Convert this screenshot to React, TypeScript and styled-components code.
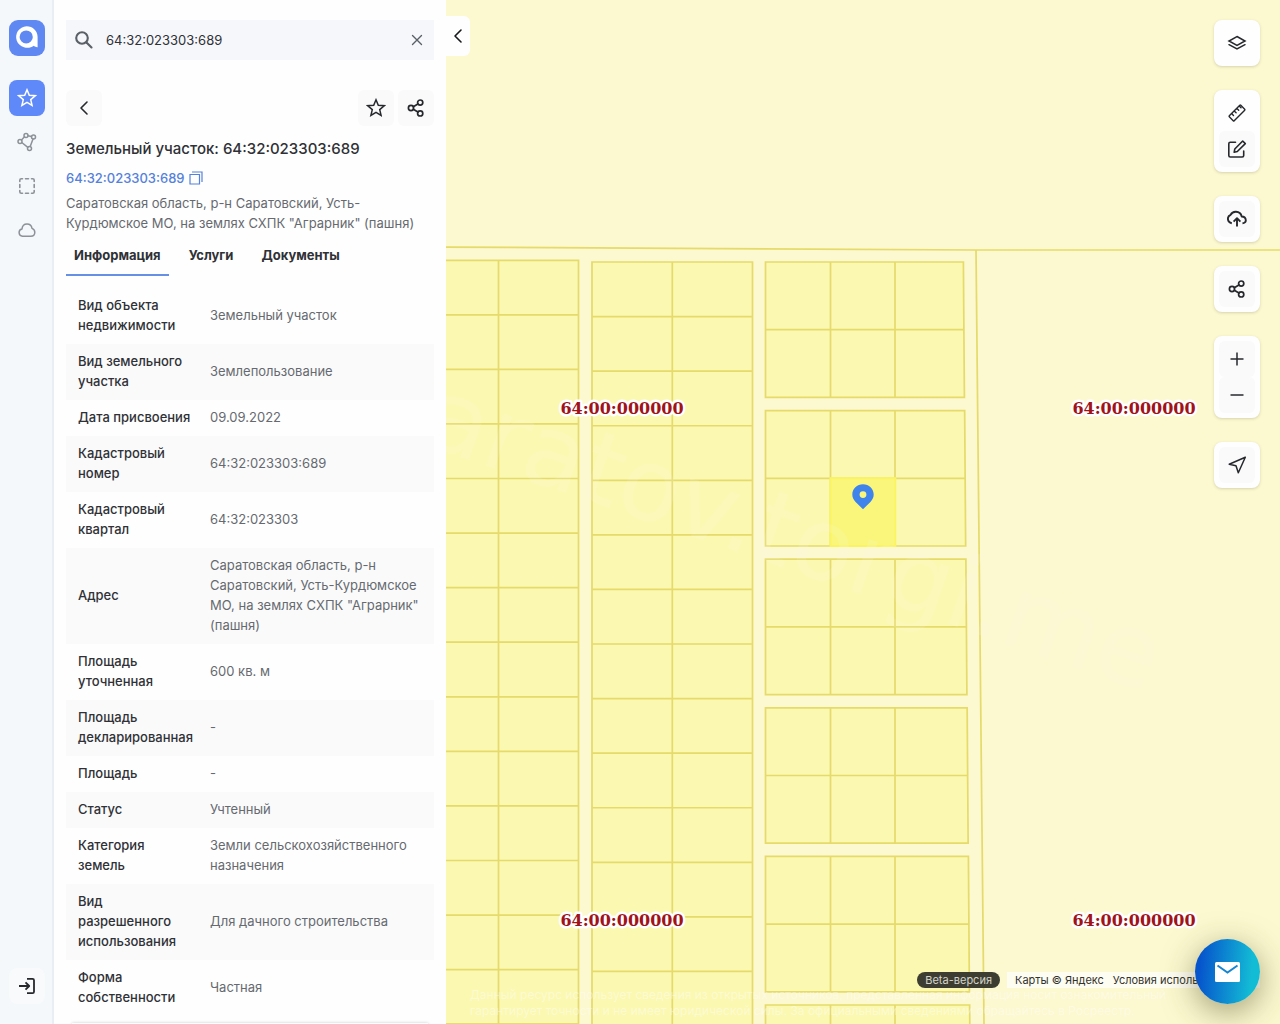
import React, { useState } from "react";
import styled, { createGlobalStyle, css } from "styled-components";

const GlobalStyle = createGlobalStyle`
  *, *::before, *::after { box-sizing: border-box; }
  body {
    margin: 0;
    font-family: Inter, "Liberation Sans", sans-serif;
    font-size: 13px;
    line-height: 20px;
    color: #2f3136;
    background: #fefefe;
  }
  button, input { font: inherit; color: inherit; }
`;

const Page = styled.div`
  display: flex;
  height: 100vh;
  overflow: hidden;
`;

const Rail = styled.nav`
  flex: none;
  display: flex;
  flex-direction: column;
  align-items: center;
  gap: 8px;
  width: 54px;
  padding: 20px 0;
  background: #f4f8fb;
  box-shadow: inset -2px 0 0 #e9eef4;
`;

const Logo = styled.a`
  display: block;
  width: 36px;
  height: 36px;
  margin-bottom: 16px;
  border-radius: 9px;
  background: #5f88f2;
`;

const plainButton = css`
  display: flex;
  align-items: center;
  justify-content: center;
  padding: 0;
  border: 0;
  background: transparent;
  cursor: pointer;
`;

const RailButton = styled.button<{ $active?: boolean }>`
  ${plainButton}
  width: 36px;
  height: 36px;
  border-radius: 8px;
  color: ${(p) => (p.$active ? "#ffffff" : "#8d9299")};
  background: ${(p) => (p.$active ? "#5f88f9" : "transparent")};
`;

const LoginButton = styled(RailButton)`
  margin-top: auto;
  color: #26282c;
  background: #f8fafb;
`;

const Panel = styled.aside`
  flex: none;
  width: 392px;
  padding: 20px 12px 0;
  overflow: hidden;
  background: #fefefe;
`;

const SearchBox = styled.form`
  display: flex;
  align-items: center;
  height: 40px;
  padding: 0 8px;
  background: #f5f7fb;
`;

const SearchInput = styled.input`
  flex: 1;
  min-width: 0;
  padding: 0 12px;
  border: 0;
  outline: 0;
  background: transparent;
`;

const ClearButton = styled.button`
  ${plainButton}
  width: 18px;
  height: 18px;
  color: #5b6067;
`;

const CardActions = styled.div`
  display: flex;
  gap: 4px;
  margin-top: 30px;
`;

const SquareButton = styled.button<{ $push?: boolean }>`
  ${plainButton}
  width: 36px;
  height: 36px;
  margin-right: ${(p) => (p.$push ? "auto" : "0")};
  border-radius: 6px;
  color: #26282c;
  background: #fafafb;
`;

const Title = styled.h1`
  margin: 11px 0 0;
  font-size: 15px;
  font-weight: 500;
  line-height: 24px;
`;

const NumberLine = styled.div`
  display: flex;
  align-items: center;
  gap: 2px;
  margin-top: 7px;
`;

const NumberLink = styled.a`
  color: #5581dc;
  font-weight: 500;
  text-decoration: none;
`;

const CopyButton = styled.button`
  ${plainButton}
  width: 18px;
  height: 20px;
  color: #5581dc;
`;

const Address = styled.p`
  margin: 5px 0 0;
  color: #666a70;
`;

const Tabs = styled.div`
  display: flex;
  gap: 12px;
  margin-top: 12px;
`;

const Tab = styled.button<{ $active: boolean }>`
  ${plainButton}
  align-items: flex-start;
  height: 31px;
  padding: 0 8px;
  font-weight: 700;
  border-bottom: 2px solid ${(p) => (p.$active ? "#6690e4" : "transparent")};
`;

const Details = styled.table`
  width: 100%;
  margin-top: 12px;
  border-collapse: collapse;
  table-layout: fixed;
`;

const DetailRow = styled.tr`
  &:nth-child(even) { background: #fafafb; }
`;

const DetailName = styled.th`
  width: 132px;
  padding: 7px 4px 9px 12px;
  font-weight: 500;
  text-align: left;
`;

const DetailValue = styled.td`
  padding: 7px 12px 9px;
  color: #666a70;
`;

const SectionCard = styled.section`
  height: 60px;
  margin: 7px 6px 0;
  box-shadow: 0 0 3px rgba(0, 0, 0, 0.2);
`;

const MapArea = styled.main`
  position: relative;
  flex: 1;
  min-width: 0;
  overflow: hidden;
  background: #fcf8cf;
`;

const MapCanvas = styled.svg`
  display: block;
  width: 100%;
  height: 100%;
`;

const CollapseButton = styled.button`
  ${plainButton}
  position: absolute;
  top: 16px;
  left: 0;
  width: 24px;
  height: 40px;
  border-radius: 0 6px 6px 0;
  color: #17181a;
  background: #fefefe;
`;

const Tools = styled.div`
  position: absolute;
  top: 20px;
  right: 20px;
  display: flex;
  flex-direction: column;
  gap: 24px;
`;

const ToolGroup = styled.div`
  padding: 5px;
  border-radius: 8px;
  background: #fefefe;
  box-shadow: 0 1px 3px rgba(80, 80, 60, 0.22);
`;

const ToolButton = styled.button<{ $tint?: boolean }>`
  ${plainButton}
  width: 36px;
  height: 36px;
  border-radius: 6px;
  color: #26282c;
  background: ${(p) => (p.$tint ? "#fafafb" : "transparent")};
`;

const MapFooter = styled.div`
  position: absolute;
  right: 20px;
  bottom: 36px;
  display: flex;
  gap: 7px;
  font-size: 11px;
  line-height: 16px;
`;

const Beta = styled.span`
  padding: 0 8px;
  border-radius: 8px;
  color: #d4d4cc;
  background: #3d3d31;
`;

const Copyright = styled.div`
  display: flex;
  gap: 9px;
  width: 253px;
  padding: 0 8px;
  white-space: nowrap;
  overflow: hidden;
  background: rgba(255, 255, 255, 0.72);
`;

const MapLink = styled.a`
  color: #33332e;
  text-decoration: none;
`;

const Disclaimer = styled.p`
  position: absolute;
  left: 24px;
  right: 80px;
  bottom: 5px;
  margin: 0;
  font-size: 12px;
  line-height: 16px;
  color: rgba(255, 255, 255, 0.42);
`;

const ChatButton = styled.button`
  ${plainButton}
  position: absolute;
  right: 20px;
  bottom: 20px;
  width: 65px;
  height: 65px;
  border-radius: 50%;
  background: linear-gradient(95deg, #0655cc 10%, #13bcd5 85%);
  box-shadow: 0 8px 32px rgba(70, 70, 30, 0.5);
`;

const Icon = ({ size = 20, width = 1.5, children }: { size?: number; width?: number; children: React.ReactNode }) => (
  <svg
    width={size}
    height={size}
    viewBox="0 0 20 20"
    fill="none"
    stroke="currentColor"
    strokeWidth={width}
    strokeLinecap="round"
    strokeLinejoin="round"
    aria-hidden="true"
  >
    {children}
  </svg>
);

const Star = () => (
  <Icon>
    <path strokeLinejoin="miter" d="M10 1.800 12.300 7.200 18.200 7.700 13.700 11.600 15.100 17.400 10 14.300 4.900 17.400 6.300 11.600 1.800 7.700 7.700 7.200Z" />
  </Icon>
);

const Share = () => (
  <Icon width={1.7}>
    <circle cx="14.2" cy="4.6" r="2.6" />
    <circle cx="5" cy="10" r="2.6" />
    <circle cx="14.2" cy="15.4" r="2.6" />
    <path d="M7.3 8.7 11.9 5.9M7.3 11.3 11.9 14.1" />
  </Icon>
);

const ChevronLeft = () => (
  <Icon width={1.6}>
    <path d="M13 4 7 10 13 16" />
  </Icon>
);

const details: [string, string][] = [
  ["Вид объекта недвижимости", "Земельный участок"],
  ["Вид земельного участка", "Землепользование"],
  ["Дата присвоения", "09.09.2022"],
  ["Кадастровый номер", "64:32:023303:689"],
  ["Кадастровый квартал", "64:32:023303"],
  ["Адрес", 'Саратовская область, р-н Саратовский, Усть-Курдюмское МО, на землях СХПК "Аграрник" (пашня)'],
  ["Площадь уточненная", "600 кв. м"],
  ["Площадь декларированная", "-"],
  ["Площадь", "-"],
  ["Статус", "Учтенный"],
  ["Категория земель", "Земли сельскохозяйственного назначения"],
  ["Вид разрешенного использования", "Для дачного строительства"],
  ["Форма собственности", "Частная"],
];

const tabs = ["Информация", "Услуги", "Документы"];

const steps = (from: number, count: number, by: number) =>
  Array.from({ length: count }, (_, i) => from + i * by);

const blocks = steps(0, 6, 1).map((i) => ({
  top: 262 + i * 148.6,
  mid: 329.7 + i * 148.6,
  bottom: 397.4 + i * 148.6,
  right: 963.4 + i * 1.25,
}));

const labels = [
  [622, 414],
  [1134, 414],
  [622, 926],
  [1134, 926],
];

const CadastralMap = () => (
  <MapCanvas role="img" aria-label="Кадастровая карта">
    <g transform="translate(-446 0)">
      <g fill="#fbf8b2" stroke="#e5da6a" strokeWidth="1.7">
        <path fill="none" d="M440 247 976 250 1900 250M976 250 984 1024" />
        <path d="M430 260.3H578.5V1024H430Z" />
        <path d="M498.5 260V1024" />
        {steps(314.8, 14, 54.57).map((y) => (
          <path key={y} d={`M440 ${y}H578.5`} />
        ))}
        <path d="M592 262 752.5 262V1040H592Z" />
        <path d="M672.3 262V1024" />
        {steps(316.6, 13, 54.57).map((y) => (
          <path key={y} d={`M592 ${y}H752.5`} />
        ))}
        {blocks.map((b) => (
          <g key={b.top}>
            <path d={`M765.5 ${b.top}H${b.right}L${b.right + 1} ${b.bottom}H765.5Z`} />
            <path d={`M765.5 ${b.mid}H${b.right + 0.5}M830.5 ${b.top}V${b.bottom}M895 ${b.top}V${b.bottom}`} />
          </g>
        ))}
      </g>
      <path d="M830.5 478.3H895.3V546H830.5Z" fill="#faf67c" stroke="#faf463" strokeWidth="2" />
      <text
        transform="translate(1147 692) rotate(18.9)"
        textAnchor="end"
        fontFamily='"DejaVu Sans", sans-serif'
        fontSize="100"
        fill="#ffffff"
        fillOpacity="0.11"
      >
        aratov.torgi.me
      </text>
      {labels.map(([x, y]) => (
        <text
          key={`${x}-${y}`}
          x={x}
          y={y}
          textAnchor="middle"
          fontFamily='"DejaVu Serif", serif'
          fontWeight="700"
          fontSize="16"
          fill="#a01319"
          stroke="#ffffff"
          strokeWidth="5"
          strokeLinejoin="round"
          paintOrder="stroke"
        >
          64:00:000000
        </text>
      ))}
      <path
        fill="#3f84ec"
        fillRule="evenodd"
        d="M863 484.2c6 0 10.7 4.6 10.7 10.4 0 3-1.300 5.400-3.300 7.400L863 509.200l-7.400-7.200c-2-2-3.300-4.400-3.300-7.400 0-5.800 4.700-10.400 10.700-10.400ZM863 491.200a3.400 3.400 0 1 0 0 6.800 3.400 3.400 0 0 0 0-6.800Z"
      />
    </g>
  </MapCanvas>
);

export default function App() {
  const [query, setQuery] = useState("64:32:023303:689");
  const [tab, setTab] = useState(tabs[0]);

  return (
    <>
      <GlobalStyle />
      <Page>
        <Rail>
          <Logo href="#" aria-label="Главная">
            <svg width="36" height="36" viewBox="0 0 36 36" aria-hidden="true">
              <path
                fill="#fff"
                fillRule="evenodd"
                d="M17.500 6.200C24 6.200 28.600 11 28.600 17v10.200c-1.200.1-2.600-.2-3.700-1.400A11.300 10.800 0 1 1 17.500 6.200ZM17.200 10.400a6.600 6.500 0 1 0 0 13 6.600 6.500 0 0 0 0-13Z"
              />
            </svg>
          </Logo>
          <RailButton $active aria-label="Избранное"><Star /></RailButton>
          <RailButton aria-label="Полигон">
            <Icon>
              <circle cx="9" cy="3.500" r="2" />
              <circle cx="16.500" cy="5" r="2" />
              <circle cx="3" cy="9.500" r="2" />
              <circle cx="12.500" cy="16.500" r="2" />
              <path d="M4.500 8 7.500 4.800M11 3.800 14.500 4.600M16 7 13.200 14.500M4.800 10.500 10.800 15.300" />
            </Icon>
          </RailButton>
          <RailButton aria-label="Выделить область">
            <Icon width={1.6}>
              <path d="M2.800 5.500V4.300Q2.800 2.800 4.300 2.800H5.500M8.500 2.800H11.500M14.500 2.800H15.700Q17.200 2.800 17.200 4.300V5.500M17.200 8.500V11.500M17.200 14.500V15.700Q17.200 17.200 15.700 17.200H14.500M11.500 17.200H8.500M5.500 17.200H4.300Q2.800 17.200 2.800 15.700V14.500M2.800 11.500V8.500" />
            </Icon>
          </RailButton>
          <RailButton aria-label="Облако">
            <Icon>
              <path d="M5.500 16.200A3.700 3.700 0 0 1 5 8.900C5.300 5.800 7.600 4 10 4c2.900 0 4.600 1.900 5 4.400 1.700.6 2.800 2 2.800 3.800 0 2.300-1.700 4-3.900 4Z" />
            </Icon>
          </RailButton>
          <LoginButton aria-label="Войти">
            <Icon width={1.8}>
              <path strokeLinecap="butt" d="M2 10H12M8.500 6.300 12.200 10 8.500 13.700M10 2.800H15.500Q17 2.800 17 4.300V15.700Q17 17.200 15.500 17.200H10" />
            </Icon>
          </LoginButton>
        </Rail>

        <Panel>
          <SearchBox role="search" onSubmit={(e) => e.preventDefault()}>
            <Icon width={2.1}>
              <circle cx="8" cy="8" r="5.800" stroke="#5b6067" />
              <path stroke="#5b6067" d="M12.500 12.500 17.500 17.500" />
            </Icon>
            <SearchInput aria-label="Поиск" value={query} onChange={(e) => setQuery(e.target.value)} />
            <ClearButton type="button" aria-label="Очистить" onClick={() => setQuery("")}>
              <Icon size={18} width={1.5}>
                <path d="M5 5 15 15M15 5 5 15" />
              </Icon>
            </ClearButton>
          </SearchBox>

          <CardActions>
            <SquareButton $push aria-label="Назад"><ChevronLeft /></SquareButton>
            <SquareButton aria-label="В избранное"><Star /></SquareButton>
            <SquareButton aria-label="Поделиться"><Share /></SquareButton>
          </CardActions>

          <Title>Земельный участок: 64:32:023303:689</Title>
          <NumberLine>
            <NumberLink href="#">64:32:023303:689</NumberLink>
            <CopyButton aria-label="Скопировать">
              <svg width="14" height="14" viewBox="0 0 14 14" fill="none" stroke="currentColor" strokeWidth="1.200" aria-hidden="true">
                <path d="M1 3.500H10.500V13H1ZM3 1H13V11" />
              </svg>
            </CopyButton>
          </NumberLine>
          <Address>Саратовская область, р-н Саратовский, Усть-Курдюмское МО, на землях СХПК "Аграрник" (пашня)</Address>

          <Tabs role="tablist">
            {tabs.map((name) => (
              <Tab key={name} role="tab" aria-selected={name === tab} $active={name === tab} onClick={() => setTab(name)}>
                {name}
              </Tab>
            ))}
          </Tabs>

          <Details>
            <tbody>
              {details.map(([name, value]) => (
                <DetailRow key={name}>
                  <DetailName scope="row">{name}</DetailName>
                  <DetailValue>{value}</DetailValue>
                </DetailRow>
              ))}
            </tbody>
          </Details>
          <SectionCard />
        </Panel>

        <MapArea>
          <CadastralMap />
          <CollapseButton aria-label="Свернуть панель"><ChevronLeft /></CollapseButton>

          <Tools>
            <ToolGroup>
              <ToolButton aria-label="Слои">
                <Icon>
                  <path strokeLinejoin="miter" d="M10 3.500 18 8 10 12.300 2 8ZM2 11.700 10 16 18 11.700" />
                </Icon>
              </ToolButton>
            </ToolGroup>
            <ToolGroup>
              <ToolButton aria-label="Линейка">
                <Icon width={1.4}>
                  <path d="M13.800 2.300 17.700 6.200Q18.200 6.700 17.700 7.200L7.200 17.700Q6.700 18.200 6.200 17.700L2.300 13.800Q1.800 13.300 2.300 12.800L12.800 2.300Q13.300 1.800 13.800 2.300ZM4.600 10.500 6.500 12.400M7.200 7.900 9.100 9.800M9.800 5.300 11.700 7.200M12.200 2.900 14 4.700" />
                </Icon>
              </ToolButton>
              <ToolButton $tint aria-label="Редактировать">
                <Icon width={1.6}>
                  <path d="M8.500 3.200H3.300Q1.800 3.200 1.800 4.700V16.500Q1.800 18 3.300 18H15.200Q16.700 18 16.700 16.500V12M15.700 2 18.300 4.600 10.300 12.500 7.200 13.200 7.800 10Z" />
                </Icon>
              </ToolButton>
            </ToolGroup>
            <ToolGroup>
              <ToolButton $tint aria-label="Загрузить">
                <Icon width={1.9}>
                  <path strokeLinecap="butt" d="M4.800 14.300C2.500 13.800 1 12.200.9 9.900.8 7.500 2.600 6.300 3.600 5.900 4.600 3.800 6.800 2.700 9 2.800c3 .1 5.100 2.200 5.700 4.700 2.300.1 4 1.600 4.100 3.700.1 1.700-1.300 3-3.300 3.100M10 17.500V9.500M6.600 12.600 10 9.200 13.400 12.600" />
                </Icon>
              </ToolButton>
            </ToolGroup>
            <ToolGroup>
              <ToolButton $tint aria-label="Поделиться картой"><Share /></ToolButton>
            </ToolGroup>
            <ToolGroup>
              <ToolButton $tint aria-label="Приблизить">
                <Icon width={1.5}><path strokeLinecap="butt" d="M10 3.500V16.500M3.500 10H16.500" /></Icon>
              </ToolButton>
              <ToolButton $tint aria-label="Отдалить">
                <Icon width={1.5}><path strokeLinecap="butt" d="M3.500 10H16.500" /></Icon>
              </ToolButton>
            </ToolGroup>
            <ToolGroup>
              <ToolButton $tint aria-label="Моё местоположение">
                <Icon><path d="M18.300 2.300 2.200 9.300 9 10.700 11.300 17.700Z" /></Icon>
              </ToolButton>
            </ToolGroup>
          </Tools>

          <Disclaimer>
            Данный ресурс использует сведения из открытых источников, представленная информация носит ознакомительный
            <br />
            гарантирует точности и не имеет юридической силы. За официальными сведениями обращайтесь в Росреестр.
          </Disclaimer>
          <MapFooter>
            <Beta>Beta-версия</Beta>
            <Copyright>
              <MapLink href="#">Карты © Яндекс</MapLink>
              <MapLink href="#">Условия использования</MapLink>
            </Copyright>
          </MapFooter>
          <ChatButton aria-label="Написать сообщение">
            <svg width="26" height="20" viewBox="0 0 26 20" aria-hidden="true">
              <rect width="25" height="20" rx="1.500" fill="#fff" />
              <path d="M2.500 3.500 12.500 10.500 22.500 3.500" fill="none" stroke="#1786d2" strokeWidth="2" />
            </svg>
          </ChatButton>
        </MapArea>
      </Page>
    </>
  );
}
